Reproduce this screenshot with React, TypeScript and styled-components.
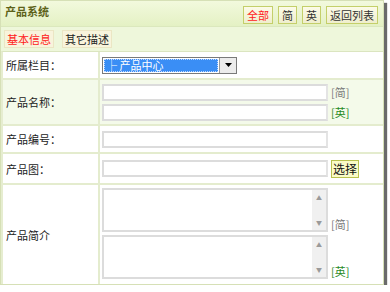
import React from 'react';
import styled, { createGlobalStyle } from 'styled-components';

const GlobalStyle = createGlobalStyle`
  body {
    margin: 0;
    background: #ffffff;
    font-family: "Noto Sans CJK SC", "Liberation Sans", sans-serif;
    font-size: 11px;
    color: #222;
  }
`;

const Panel = styled.div`
  width: 382px;
  height: 283px;
  border: 1px solid #d6e0b6;
  box-shadow: 3px 3px 1px #6a6a6a;
  background: #fff;
  display: flex;
  flex-direction: column;
`;

const Header = styled.div`
  height: 25px;
  display: flex;
  align-items: center;
  justify-content: space-between;
  padding: 0 5px 0 4px;
  background: linear-gradient(#f2f9dd, #e4f1c4);
  border-bottom: 1px solid #dbe8bd;
`;

const Title = styled.div`
  font-weight: bold;
  color: #5d6219;
  font-size: 11px;
  margin-top: -6px;
`;

const Tools = styled.div`
  display: flex;
  gap: 5px;
  padding-top: 2px;
`;

const ToolButton = styled.span<{ $active?: boolean }>`
  display: inline-flex;
  align-items: center;
  height: 16px;
  padding: 0 3px;
  border: 1px solid #c4cf6a;
  background: linear-gradient(#fcfbe8, #efeecd);
  color: ${({ $active }) => ($active ? '#ff1a1a' : '#333')};
`;

const TabBar = styled.div`
  height: 24px;
  display: flex;
  align-items: center;
  gap: 8px;
  padding: 0 3px;
  background: #eef7db;
`;

const Tab = styled.span<{ $active?: boolean }>`
  display: inline-flex;
  align-items: center;
  height: 16px;
  padding: 0 2px;
  background: #f8f4dc;
  border: 1px solid #ebe6c4;
  color: ${({ $active }) => ($active ? '#ff2020' : '#222')};
`;

const Table = styled.div`
  flex: 1;
  display: flex;
  flex-direction: column;
  border-left: 2px solid #e6edd0;
  border-top: 1px solid #dbe5c0;
`;

const Row = styled.div<{ $h: number; $tint?: boolean }>`
  height: ${({ $h }) => $h}px;
  display: flex;
  border-bottom: 2px solid #e4ecce;
  background: ${({ $tint }) => ($tint ? '#f4faea' : '#fff')};
  box-sizing: border-box;
  &:last-child {
    border-bottom: none;
    flex: 1;
  }
`;

const Label = styled.div`
  width: 92px;
  padding-left: 3px;
  display: flex;
  align-items: center;
  border-right: 2px solid #e4ecce;
  color: #222;
`;

const Cell = styled.div`
  flex: 1;
  display: flex;
  flex-direction: column;
  justify-content: center;
  gap: 3px;
  padding-left: 2px;
`;

const Line = styled.div`
  display: flex;
  align-items: center;
  gap: 3px;
`;

const Input = styled.div`
  width: 222px;
  height: 13px;
  border: 2px solid #dcdcdc;
  border-right-color: #e4e4e4;
  background: #fff;
`;

const Lang = styled.span<{ $en?: boolean }>`
  color: ${({ $en }) => ($en ? '#1f8a1f' : '#7a7a7a')};
`;

const Select = styled.div`
  width: 133px;
  height: 15px;
  border: 1px solid #7a7a7a;
  display: flex;
  background: #fff;
`;

const SelectText = styled.div`
  flex: 1;
  margin: 1px;
  background: #3a8ef5;
  color: #fff;
  display: flex;
  align-items: center;
  line-height: 13px;
  padding-left: 1px;
  border: 1px dotted #c0d8ff;
`;

const SelectArrow = styled.div`
  width: 16px;
  background: #ececec;
  border-left: 1px solid #9a9a9a;
  display: flex;
  align-items: center;
  justify-content: center;
`;

const PickButton = styled.span`
  display: inline-flex;
  align-items: center;
  height: 16px;
  padding: 0 1px;
  border: 1px solid #b9c24e;
  background: #fbfbc7;
  color: #111;
  font-size: 12px;
`;

const AreaCell = styled(Cell)`
  justify-content: flex-start;
  padding-top: 3px;
`;

const Area = styled.div`
  width: 222px;
  height: 40px;
  border: 2px solid #dcdcdc;
  display: flex;
  justify-content: flex-end;
  background: #fff;
`;

const Scroll = styled.div`
  width: 14px;
  background: #f0f0f0;
  display: flex;
  flex-direction: column;
  justify-content: space-between;
  align-items: center;
  padding: 4px 0;
  color: #9a9a9a;
  font-size: 6px;
  line-height: 7px;
`;

const AreaLine = styled(Line)`
  align-items: flex-end;
`;

const TextArea = ({ lang, en }: { lang: string; en?: boolean }) => (
  <AreaLine>
    <Area>
      <Scroll>
        <span>▲</span>
        <span>▼</span>
      </Scroll>
    </Area>
    <Lang $en={en}>[{lang}]</Lang>
  </AreaLine>
);

const App: React.FC = () => {
  return (
    <>
      <GlobalStyle />
      <Panel>
        <Header>
          <Title>产品系统</Title>
          <Tools>
            <ToolButton $active>全部</ToolButton>
            <ToolButton>简</ToolButton>
            <ToolButton>英</ToolButton>
            <ToolButton>返回列表</ToolButton>
          </Tools>
        </Header>
        <TabBar>
          <Tab $active>基本信息</Tab>
          <Tab>其它描述</Tab>
        </TabBar>
        <Table>
          <Row $h={28}>
            <Label>所属栏目：</Label>
            <Cell>
              <Select>
                <SelectText>├ 产品中心</SelectText>
                <SelectArrow>
                  <svg width="7" height="4" viewBox="0 0 7 4">
                    <path d="M0 0h7L3.5 4z" fill="#000" />
                  </svg>
                </SelectArrow>
              </Select>
            </Cell>
          </Row>
          <Row $h={46} $tint>
            <Label>产品名称：</Label>
            <Cell>
              <Line>
                <Input />
                <Lang>[简]</Lang>
              </Line>
              <Line>
                <Input />
                <Lang $en>[英]</Lang>
              </Line>
            </Cell>
          </Row>
          <Row $h={28}>
            <Label>产品编号：</Label>
            <Cell>
              <Line>
                <Input />
              </Line>
            </Cell>
          </Row>
          <Row $h={31}>
            <Label>产品图：</Label>
            <Cell>
              <Line>
                <Input />
                <PickButton>选择</PickButton>
              </Line>
            </Cell>
          </Row>
          <Row $h={100}>
            <Label>产品简介</Label>
            <AreaCell>
              <TextArea lang="简" />
              <TextArea lang="英" en />
            </AreaCell>
          </Row>
        </Table>
      </Panel>
    </>
  );
};

export default App;
